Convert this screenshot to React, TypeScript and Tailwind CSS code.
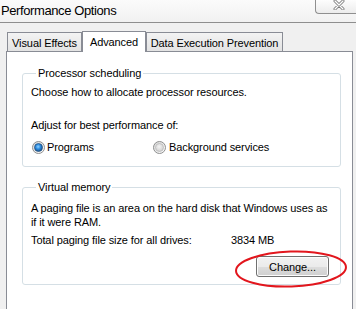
import React from "react";

function Radio({ checked }: { checked: boolean }) {
  return (
    <svg width="13" height="13" viewBox="0 0 13 13" className="shrink-0">
      <defs>
        <linearGradient id={checked ? "rg1" : "rg0"} x1="0" y1="0" x2="1" y2="1">
          <stop offset="0" stopColor="#d6d6d6" />
          <stop offset="1" stopColor="#ffffff" />
        </linearGradient>
        <radialGradient id="dot" cx="0.45" cy="0.4" r="0.6">
          <stop offset="0" stopColor="#8fd3ff" />
          <stop offset="0.5" stopColor="#2a8ae0" />
          <stop offset="1" stopColor="#1b4f86" />
        </radialGradient>
        <radialGradient id="gdot" cx="0.45" cy="0.4" r="0.6">
          <stop offset="0" stopColor="#f4f4f4" />
          <stop offset="1" stopColor="#cfcfcf" />
        </radialGradient>
      </defs>
      <circle cx="6.5" cy="6.5" r="6" fill={checked ? "url(#rg1)" : "url(#rg0)"} stroke="#8e8f8f" />
      <circle cx="6.5" cy="6.5" r="4" fill={checked ? "url(#dot)" : "url(#gdot)"} stroke={checked ? "#1f4f7e" : "#b8b8b8"} strokeWidth="0.7" />
    </svg>
  );
}

export default function App() {
  return (
    <div className="relative w-[356px] h-[309px] overflow-hidden bg-[#f0f0f0] text-[11px] leading-[14px] tracking-[-0.1px] text-black font-['Liberation_Sans',Arial,sans-serif] flex flex-col">
      {/* Title bar */}
      <div className="h-[23px] shrink-0 flex items-start justify-between border-b border-[#8e8e8e] bg-gradient-to-b from-[#fbfbfb] to-[#f1f1f1]">
        <span className="ml-[1px] mt-[3px] text-[13px] leading-[16px] tracking-[-0.4px] text-black">Performance Options</span>
        <div className="w-[41px] h-[14px] border-l border-b border-[#8f8f8f] rounded-bl-[4px] bg-gradient-to-b from-[#fdfdfd] to-[#ececec] flex items-start justify-start pl-[17px]">
          <svg width="12" height="10" viewBox="0 0 12 10">
            <path d="M2 1 L10 9 M10 1 L2 9" stroke="#7a7a7a" strokeWidth="3" strokeLinecap="round" />
            <path d="M2 1 L10 9 M10 1 L2 9" stroke="#ffffff" strokeWidth="1.3" strokeLinecap="round" />
          </svg>
        </div>
      </div>

      {/* Tabs */}
      <div className="mt-[8px] h-[20px] shrink-0 flex items-end pl-[7px]">
        <div className="w-[75px] h-[19px] border border-b-0 border-[#898c95] bg-gradient-to-b from-[#f3f3f3] to-[#e3e3e3] flex justify-center pt-[3px] text-black">
          Visual Effects
        </div>
        <div className="relative z-10 -mb-[1px] w-[64px] h-[21px] border border-b-0 border-[#898c95] bg-white flex justify-center pt-[3px]">
          Advanced
        </div>
        <div className="w-[137px] h-[19px] border border-b-0 border-[#898c95] bg-gradient-to-b from-[#f3f3f3] to-[#e3e3e3] flex justify-center pt-[3px]">
          Data Execution Prevention
        </div>
      </div>

      {/* Panel */}
      <div className="ml-[6px] w-[347px] flex-1 border border-b-0 border-[#898c95] bg-white pt-[14px] pl-[15px]">
        <fieldset className="w-[319px] border border-[#d5dfe5] rounded-[3px] pl-[8px] pb-[12px]">
          <legend className="ml-[5px] px-[2px]">Processor scheduling</legend>
          <div className="mt-[5px]">Choose how to allocate processor resources.</div>
          <div className="mt-[19px]">Adjust for best performance of:</div>
          <div className="mt-[8px] flex items-center">
            <div className="w-[122px] flex items-center gap-[2px] pl-[1px]">
              <Radio checked />
              <span>Programs</span>
            </div>
            <div className="flex items-center gap-[3px]">
              <Radio checked={false} />
              <span>Background services</span>
            </div>
          </div>
        </fieldset>

        <fieldset className="mt-[13px] w-[319px] border border-[#d5dfe5] rounded-[3px] pl-[8px] pb-[7px]">
          <legend className="ml-[5px] px-[2px]">Virtual memory</legend>
          <div className="mt-[7px]">
            A paging file is an area on the hard disk that Windows uses as
            <br />
            if it were RAM.
          </div>
          <div className="mt-[4px] flex">
            <span className="w-[200px]">Total paging file size for all drives:</span>
            <span>3834 MB</span>
          </div>
          <div className="mt-[9px] flex justify-end pr-[11px]">
            <button className="w-[73px] h-[21px] border border-[#707070] rounded-[3px] bg-[linear-gradient(to_bottom,#f2f2f2_0%,#ebebeb_50%,#dddddd_51%,#cfcfcf_100%)] shadow-[inset_0_0_0_1px_#fcfcfc] flex items-center justify-center">
              Change...
            </button>
          </div>
        </fieldset>
      </div>

      {/* Red annotation ellipse */}
      <svg className="absolute left-[234px] top-[248px] pointer-events-none" width="116" height="42" viewBox="0 0 116 42">
        <ellipse cx="57" cy="21" rx="55" ry="17.5" fill="none" stroke="#e2161d" strokeWidth="2" transform="rotate(-2 57 21)" />
      </svg>
    </div>
  );
}
